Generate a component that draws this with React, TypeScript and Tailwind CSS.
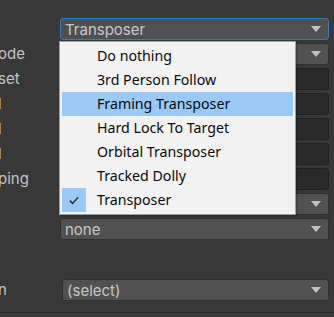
import React from 'react';

const labelFont = { fontFamily: 'Inter, "Liberation Sans", sans-serif' };

function Arrow() {
  return (
    <svg width="10" height="6" viewBox="0 0 10 6" className="shrink-0">
      <path d="M0 0 L10 0 L5 6 Z" fill="#c2c2c2" />
    </svg>
  );
}

function Dropdown({ text, focused }: { text?: string; focused?: boolean }) {
  return (
    <div
      className={`flex h-[22px] flex-1 items-center justify-between rounded-[3px] border pl-[4px] pr-[7px] ${
        focused ? 'border-[#3a7ac4] bg-[#505050]' : 'border-[#303030] bg-[#515151]'
      }`}
    >
      <span className="text-[15px] leading-none text-[#c8c8c8]">{text}</span>
      <Arrow />
    </div>
  );
}

function Field() {
  return <div className="h-[22px] flex-1 rounded-[3px] border border-[#212121] bg-[#2a2a2a]" />;
}

function Row({ label, children, indent }: { label?: string; children: React.ReactNode; indent?: boolean }) {
  return (
    <div className="mb-[3px] flex h-[22px] items-center pr-[5px]">
      <div className={`${indent ? 'w-[62px]' : 'w-[60px]'} shrink-0 overflow-hidden whitespace-nowrap text-[15px] text-[#c4c4c4]`}>
        <span className="ml-[-2px]">{label}</span>
      </div>
      {children}
    </div>
  );
}

const items = [
  'Do nothing',
  '3rd Person Follow',
  'Framing Transposer',
  'Hard Lock To Target',
  'Orbital Transposer',
  'Tracked Dolly',
  'Transposer',
];

function Menu() {
  return (
    <div
      className="absolute left-[59px] top-[41px] w-[237px] border border-[#a0a0a0] bg-[#f2f2f2] px-[2px] py-[2px] shadow-[1px_1px_2px_rgba(0,0,0,0.3)]"
      style={{ fontFamily: '"Noto Sans", sans-serif' }}
    >
      {items.map((it, i) => (
        <div
          key={it}
          className={`relative flex h-[24px] items-center pl-[35px] text-[14.2px] leading-none text-[#0a0a0a] ${
            i === 2 ? 'bg-[#99c9f4]' : ''
          }`}
        >
          {i === 6 && (
            <div className="absolute left-0 top-0 flex h-[24px] w-[24px] items-center justify-center bg-[#99c9f4]">
              <svg width="10" height="9" viewBox="0 0 10 9">
                <path d="M0.8 4.6 L3.6 7.4 L9.2 1.2" fill="none" stroke="#333" strokeWidth="1.5" />
              </svg>
            </div>
          )}
          {it}
        </div>
      ))}
    </div>
  );
}

export default function App() {
  return (
    <div className="relative h-[317px] w-[334px] overflow-hidden bg-[#383838]" style={labelFont}>
      <div className="pt-[18px]">
        <Row>
          <Dropdown text="Transposer" focused />
        </Row>
        <Row label="ode">
          <Dropdown />
        </Row>
        <Row label="set">
          <Field />
        </Row>
        <Row label="l">
          <Field />
        </Row>
        <Row label="l">
          <Field />
        </Row>
        <Row label="l">
          <Field />
        </Row>
        <Row label="ping">
          <Field />
        </Row>
        <Row>
          <Dropdown />
        </Row>
        <Row>
          <Dropdown text="none" />
        </Row>
        <div className="h-[36px]" />
        <Row label="n" indent>
          <Dropdown text="(select)" />
        </Row>
      </div>
      <div className="absolute left-0 right-0 top-[312px] h-[1px] bg-[#262626]" />
      <div className="absolute bottom-0 left-0 right-0 top-[313px] bg-[#3a3a3a]" />
      <Menu />
    </div>
  );
}
